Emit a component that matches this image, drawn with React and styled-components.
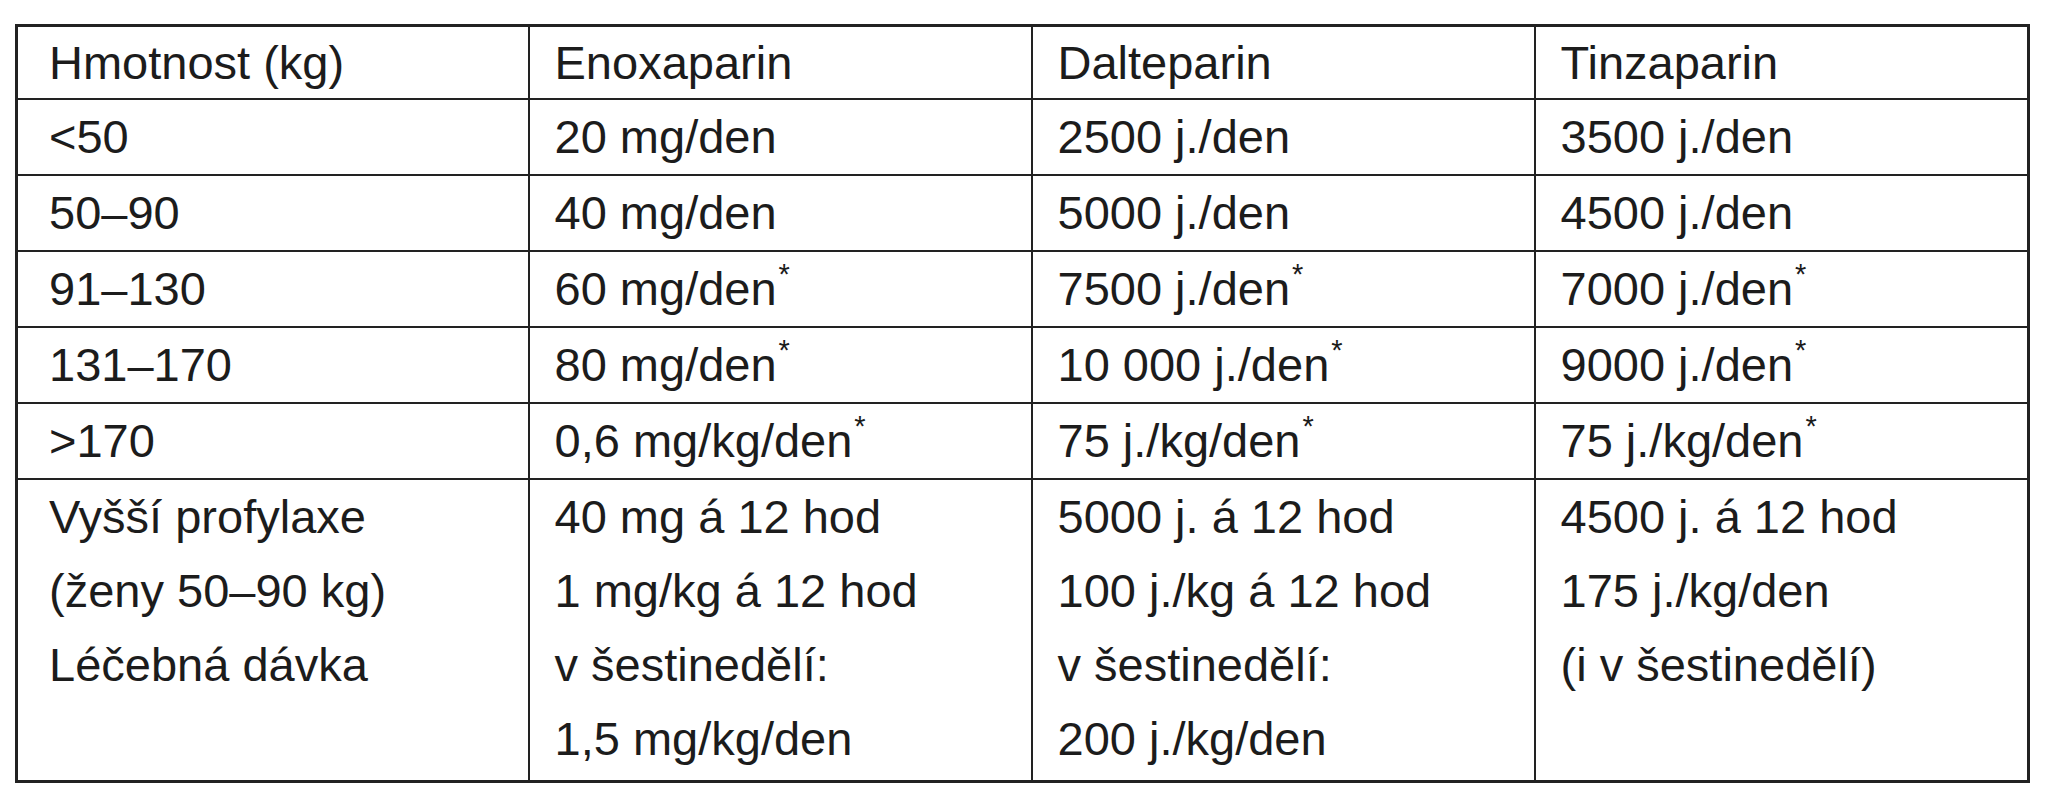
import React from "react";
import styled, { createGlobalStyle } from "styled-components";

const Global = createGlobalStyle`
  html, body { margin: 0; padding: 0; background: #ffffff; }
  body { font-family: "Liberation Sans", Arial, sans-serif; }
`;

const Page = styled.div`
  padding: 24px 0 0 15px;
  background: #ffffff;
`;

const Table = styled.table`
  border-collapse: collapse;
  table-layout: fixed;
  width: 2012px;
  border: 3px solid #222222;
  color: #1c1c1c;
  font-family: "Liberation Sans", Arial, sans-serif;
  font-size: 47px;
`;

const Col = styled.col`
  width: ${(p) => p.$w}px;
`;

const Cell = styled.td`
  border: 2px solid #222222;
  padding: 0 0 ${(p) => (p.$tall ? 4 : 0)}px ${(p) => (p.$first ? 31 : 25)}px;
  height: ${(p) => (p.$head ? 71 : 74)}px;
  line-height: ${(p) => (p.$head ? 71 : 74)}px;
  vertical-align: top;
  white-space: nowrap;
`;

const Line = styled.div`
  line-height: 74px;
`;

const Star = styled.span`
  display: inline-block;
  font-size: 29px;
  line-height: 0;
  vertical-align: top;
  position: relative;
  top: 22px;
  margin-left: 2px;
`;

const widths = [512, 503, 503, 494];

const rows = [
  ["Hmotnost (kg)", "Enoxaparin", "Dalteparin", "Tinzaparin"],
  ["<50", "20 mg/den", "2500 j./den", "3500 j./den"],
  ["50–90", "40 mg/den", "5000 j./den", "4500 j./den"],
  ["91–130", "60 mg/den*", "7500 j./den*", "7000 j./den*"],
  ["131–170", "80 mg/den*", "10 000 j./den*", "9000 j./den*"],
  [">170", "0,6 mg/kg/den*", "75 j./kg/den*", "75 j./kg/den*"],
];

const lastRow = [
  ["Vyšší profylaxe", "(ženy 50–90 kg)", "Léčebná dávka"],
  ["40 mg á 12 hod", "1 mg/kg á 12 hod", "v šestinedělí:", "1,5 mg/kg/den"],
  ["5000 j. á 12 hod", "100 j./kg á 12 hod", "v šestinedělí:", "200 j./kg/den"],
  ["4500 j. á 12 hod", "175 j./kg/den", "(i v šestinedělí)"],
];

function Text({ value }) {
  if (value.endsWith("*")) {
    return (
      <>
        {value.slice(0, -1)}
        <Star>*</Star>
      </>
    );
  }
  return value;
}

export default function App() {
  return (
    <Page>
      <Global />
      <Table>
        <colgroup>
          {widths.map((w, i) => (
            <Col key={i} $w={w} />
          ))}
        </colgroup>
        <tbody>
          {rows.map((r, i) => (
            <tr key={i}>
              {r.map((c, j) => (
                <Cell key={j} $first={j === 0} $head={i === 0}>
                  <Text value={c} />
                </Cell>
              ))}
            </tr>
          ))}
          <tr>
            {lastRow.map((lines, j) => (
              <Cell key={j} $first={j === 0} $tall>
                {lines.map((l, k) => (
                  <Line key={k}>{l}</Line>
                ))}
              </Cell>
            ))}
          </tr>
        </tbody>
      </Table>
    </Page>
  );
}
